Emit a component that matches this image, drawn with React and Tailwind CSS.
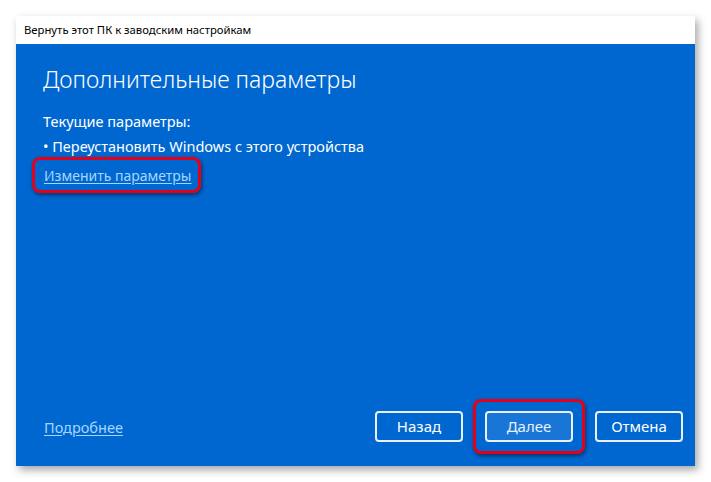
export default function App() {
  return (
    <div className="w-[711px] h-[482px] bg-white pt-[16px] pl-[16px]" style={{ fontFamily: '"Noto Sans", "Open Sans", sans-serif' }}>
      <div className="w-[679px] h-[450px] flex flex-col shadow-[3px_4px_8px_rgba(0,0,0,0.35)]">
        <div className="h-[28px] bg-white flex items-center pl-[8px] text-[11.3px] text-black">
          Вернуть этот ПК к заводским настройкам
        </div>
        <div className="flex-1 bg-[#0067d1] flex flex-col px-[27px] text-white">
          <div className="mt-[20px] text-[23px] leading-[30px] font-light">Дополнительные параметры</div>
          <div className="mt-[17px] text-[14.5px] leading-[20px]">Текущие параметры:</div>
          <div className="mt-[5px] text-[14.5px] leading-[20px]">• Переустановить Windows с этого устройства</div>
          <div className="mt-[1px] self-start -ml-[11px] pl-[9px] pr-[6px] py-[3px] rounded-[8px] border-[3px] border-[#e3001b] shadow-[1px_2px_4px_rgba(0,0,0,0.5)]">
            <span className="text-[14px] leading-[20px] text-[#a6d6ff] underline underline-offset-2">Изменить параметры</span>
          </div>
          <div className="flex-1" />
          <div className="flex items-center mb-[24px]">
            <span className="text-[14.5px] leading-[20px] text-[#a6d6ff] underline underline-offset-2 ml-[1px]">Подробнее</span>
            <div className="flex-1" />
            <button className="w-[88px] h-[31px] rounded-[4px] border-[2px] border-[#e8f0fa] text-[15px] text-white">Назад</button>
            <div className="ml-[10px] p-[9px] rounded-[8px] border-[3px] border-[#e3001b] shadow-[1px_2px_4px_rgba(0,0,0,0.5)] -my-[12px]">
              <button className="w-[88px] h-[31px] rounded-[4px] border-[2px] border-[#e8f0fa] bg-[#1a76d6] text-[15px] text-[#e6f1ff]">Далее</button>
            </div>
            <button className="ml-[10px] w-[88px] h-[31px] rounded-[4px] border-[2px] border-[#e8f0fa] text-[15px] text-white mr-[-15px]">Отмена</button>
          </div>
        </div>
      </div>
    </div>
  );
}
